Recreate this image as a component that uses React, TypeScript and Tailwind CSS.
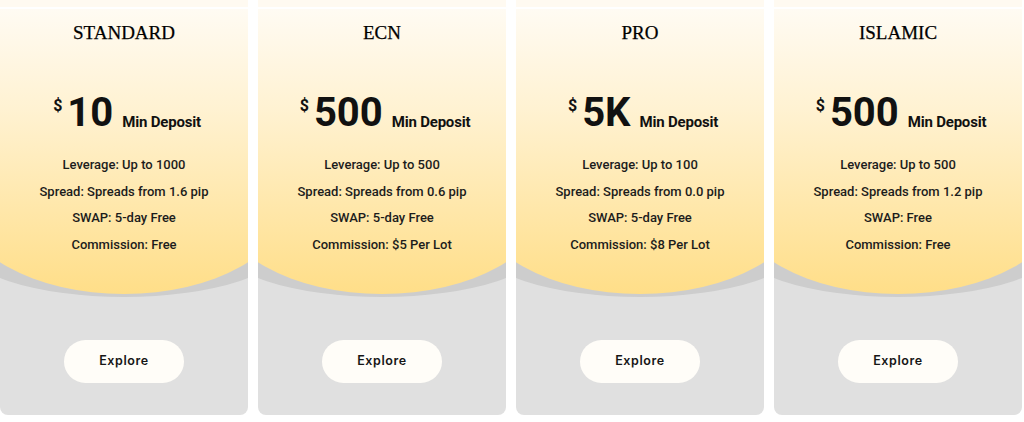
const plans = [
  {
    name: 'STANDARD',
    amount: '10',
    features: ['Leverage: Up to 1000', 'Spread: Spreads from 1.6 pip', 'SWAP: 5-day Free', 'Commission: Free'],
  },
  {
    name: 'ECN',
    amount: '500',
    features: ['Leverage: Up to 500', 'Spread: Spreads from 0.6 pip', 'SWAP: 5-day Free', 'Commission: $5 Per Lot'],
  },
  {
    name: 'PRO',
    amount: '5K',
    features: ['Leverage: Up to 100', 'Spread: Spreads from 0.0 pip', 'SWAP: 5-day Free', 'Commission: $8 Per Lot'],
  },
  {
    name: 'ISLAMIC',
    amount: '500',
    features: ['Leverage: Up to 500', 'Spread: Spreads from 1.2 pip', 'SWAP: Free', 'Commission: Free'],
  },
];

type Plan = (typeof plans)[number];

function PlanCard({ plan }: { plan: Plan }) {
  return (
    <div className="flex flex-col">
      {/* strip left over from the section above */}
      <div className="h-[7px] bg-[#fffaf1]" />
      <div className="mt-[2px] flex h-[406px] flex-col overflow-hidden rounded-b-[8px] bg-[#e0e0e0]">
        {/* gray arc behind the yellow panel */}
        <div className="-mx-[40px] rounded-b-[50%_55px] bg-[#cdcdcd] pb-[3px]">
          <div className="flex flex-col items-center rounded-b-[50%_92px] bg-[linear-gradient(180deg,#fffbf3_0%,#fff2d2_35%,#ffde88_100%)] pt-[12px] pb-[36px] font-['Roboto',sans-serif] text-[#111]">
            <h2 className="font-['Liberation_Serif',serif] text-[19px] leading-[24px] font-normal text-black [-webkit-text-stroke:0.25px_#000]">
              {plan.name}
            </h2>

            <div className="mt-[44px] flex items-start pl-[6px]">
              <span className="mt-[8px] text-[16px] leading-[18px] font-bold">$</span>
              <span className="ml-[5px] text-[40px] leading-[48px] font-bold">{plan.amount}</span>
              <span className="mt-[24px] ml-[9px] text-[15px] leading-[18px] font-bold tracking-[-0.2px]">
                Min Deposit
              </span>
            </div>

            <ul className="mt-[15px] flex flex-col items-center text-[13px] leading-[26.5px] font-medium text-[#1c1c1c]">
              {plan.features.map((f) => (
                <li key={f}>{f}</li>
              ))}
            </ul>
          </div>
        </div>

        <div className="mt-[43px] flex justify-center">
          <button className="h-[43px] w-[120px] rounded-full bg-[#fffdf8] font-['Inter',sans-serif] text-[12.5px] font-semibold tracking-[0.6px] text-[#161616]">
            Explore
          </button>
        </div>
      </div>
    </div>
  );
}

export default function App() {
  return (
    <div className="h-[422px] w-[1024px] bg-white">
      <div className="grid w-[1022px] grid-cols-[repeat(4,248px)] gap-x-[10px]">
        {plans.map((p) => (
          <PlanCard key={p.name} plan={p} />
        ))}
      </div>
    </div>
  );
}
